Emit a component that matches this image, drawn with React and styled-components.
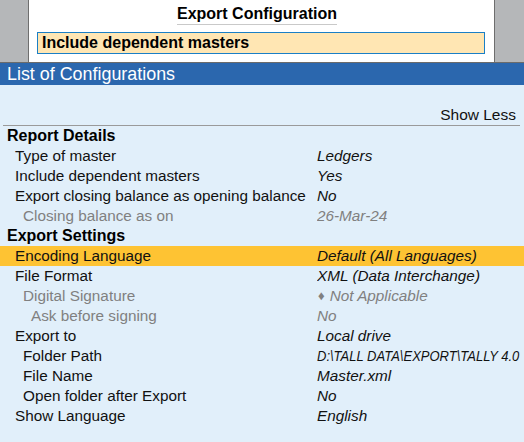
import React from "react";
import styled, { createGlobalStyle } from "styled-components";

const Global = createGlobalStyle`
  html, body { margin: 0; padding: 0; }
  body {
    font-family: "Liberation Sans", Arial, sans-serif;
    width: 524px;
    height: 442px;
    overflow: hidden;
    background: #e1effa;
  }
`;

const Page = styled.div`
  display: flex;
  flex-direction: column;
  width: 524px;
  height: 442px;
  overflow: hidden;
`;

const TopArea = styled.div`
  display: flex;
  height: 62px;
  background: #b5b7b9;
  border-bottom: 1px solid #6b6b6b;
  padding-left: 28px;
  padding-right: 29px;
`;

const Dialog = styled.div`
  flex: 1;
  display: flex;
  flex-direction: column;
  align-items: stretch;
  background: #ffffff;
  border-left: 1px solid #6e6e6e;
  border-right: 1px solid #6e6e6e;
`;

const TitleRow = styled.div`
  display: flex;
  justify-content: center;
  padding-top: 4px;
  padding-right: 9px;
  height: 32px;
  box-sizing: border-box;
`;

const Title = styled.div`
  font-weight: bold;
  font-size: 16px;
  line-height: 19px;
  color: #000;
  height: 20px;
  border-bottom: 1px solid #c9c9c9;
`;

const InputBox = styled.div`
  margin: 0 9px 0 8px;
  height: 22px;
  box-sizing: border-box;
  border: 1px solid #1a7fc6;
  background: #ffe6b3;
  font-weight: bold;
  font-size: 16px;
  line-height: 20px;
  padding-left: 4px;
  color: #000;
`;

const HeaderBar = styled.div`
  height: 22px;
  background: #2b67ae;
  color: #ffffff;
  font-size: 17.9px;
  line-height: 22px;
  padding-left: 7px;
`;

const Body = styled.div`
  flex: 1;
  background: #e1effa;
  padding-top: 20px;
`;

const ShowLessRow = styled.div`
  display: flex;
  justify-content: flex-end;
  margin: 0 4px 0 3px;
  padding-right: 4px;
  height: 20px;
  border-bottom: 1px solid #9a9a9a;
  font-size: 15.5px;
  line-height: 19px;
  color: #111;
`;

const Row = styled.div`
  display: grid;
  grid-template-columns: 317px 1fr;
  height: 20px;
  line-height: 20px;
  background: ${(p) => (p.$active ? "#fec333" : "transparent")};
  color: ${(p) => (p.$muted ? "#808080" : "#111")};
`;

const Label = styled.div`
  padding-left: ${(p) => p.$indent}px;
  font-size: ${(p) => (p.$heading ? "16px" : "15.3px")};
  font-weight: ${(p) => (p.$heading ? "bold" : "normal")};
  color: ${(p) => (p.$heading ? "#000" : "inherit")};
  white-space: nowrap;
`;

const Value = styled.div`
  font-style: italic;
  font-size: 15.3px;
  white-space: nowrap;
  overflow: hidden;
`;

const Narrow = styled.span`
  display: inline-block;
  transform: scaleX(0.85);
  transform-origin: left center;
`;

const Diamond = styled.span`
  font-style: normal;
  font-size: 13px;
  margin-left: 1px;
  margin-right: 5px;
  vertical-align: 1px;
`;

const rows = [
  { label: "Report Details", indent: 7, heading: true },
  { label: "Type of master", indent: 15, value: "Ledgers" },
  { label: "Include dependent masters", indent: 15, value: "Yes" },
  { label: "Export closing balance as opening balance", indent: 15, value: "No" },
  { label: "Closing balance as on", indent: 23, value: "26-Mar-24", muted: true },
  { label: "Export Settings", indent: 7, heading: true },
  { label: "Encoding Language", indent: 15, value: "Default (All Languages)", active: true },
  { label: "File Format", indent: 15, value: "XML (Data Interchange)" },
  { label: "Digital Signature", indent: 23, value: "Not Applicable", muted: true, diamond: true },
  { label: "Ask before signing", indent: 31, value: "No", muted: true },
  { label: "Export to", indent: 15, value: "Local drive" },
  { label: "Folder Path", indent: 23, value: "D:\\TALL DATA\\EXPORT\\TALLY 4.0", narrow: true },
  { label: "File Name", indent: 23, value: "Master.xml" },
  { label: "Open folder after Export", indent: 23, value: "No" },
  { label: "Show Language", indent: 15, value: "English" },
];

export default function App() {
  return (
    <Page>
      <Global />
      <TopArea>
        <Dialog>
          <TitleRow>
            <Title>Export Configuration</Title>
          </TitleRow>
          <InputBox>Include dependent masters</InputBox>
        </Dialog>
      </TopArea>
      <HeaderBar>List of Configurations</HeaderBar>
      <Body>
        <ShowLessRow>Show Less</ShowLessRow>
        {rows.map((r) => (
          <Row key={r.label} $active={r.active} $muted={r.muted}>
            <Label $indent={r.indent} $heading={r.heading}>
              {r.label}
            </Label>
            <Value>
              {r.diamond && <Diamond>♦</Diamond>}
              {r.narrow ? <Narrow>{r.value}</Narrow> : r.value}
            </Value>
          </Row>
        ))}
      </Body>
    </Page>
  );
}
